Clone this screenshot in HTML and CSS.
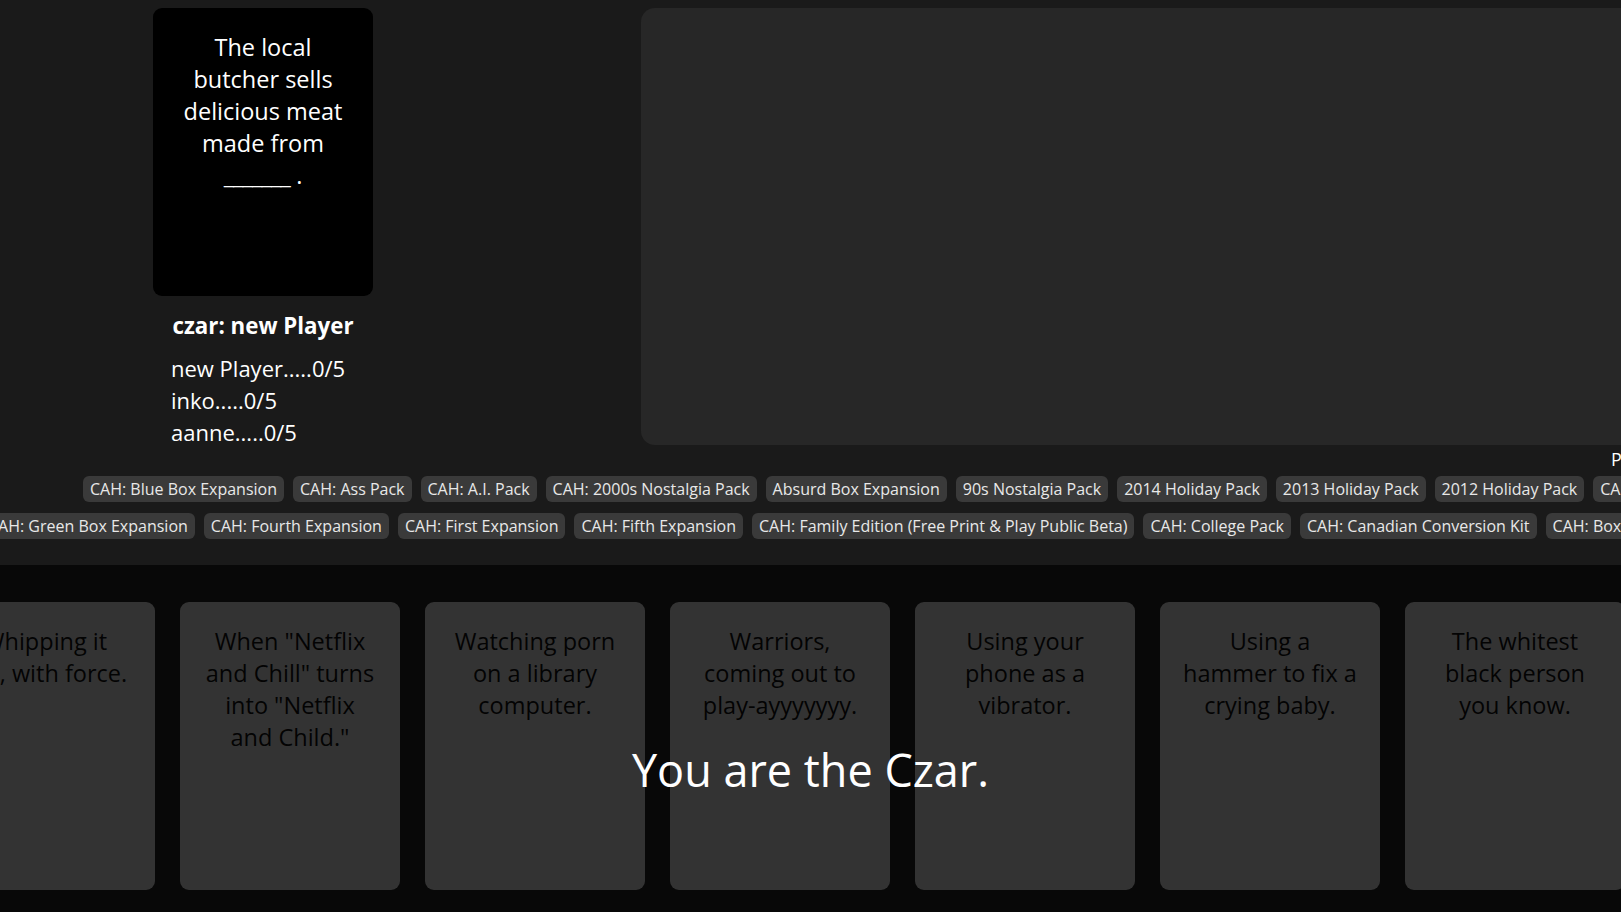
FILE: index.html
```html
<!DOCTYPE html>
<html lang="en">
<head>
<meta charset="utf-8">
<title>Czar</title>
<link rel="stylesheet" href="styles.css">
</head>
<body>
<main class="table">
  <section class="top">
    <div class="board">
      <div class="round">
        <div class="black-card">The local<br>butcher sells<br>delicious meat<br>made from<br><span class="blank">_______</span> .</div>
        <h2 class="czar">czar: new Player</h2>
        <ul class="players">
          <li>new Player.....0/5</li>
          <li>inko.....0/5</li>
          <li>aanne.....0/5</li>
        </ul>
      </div>
      <div class="submissions"></div>
    </div>
    <div class="packs-title">Packs</div>
    <div class="tags-row">
      <span class="tag">CAH: Blue Box Expansion</span>
      <span class="tag">CAH: Ass Pack</span>
      <span class="tag">CAH: A.I. Pack</span>
      <span class="tag">CAH: 2000s Nostalgia Pack</span>
      <span class="tag">Absurd Box Expansion</span>
      <span class="tag">90s Nostalgia Pack</span>
      <span class="tag">2014 Holiday Pack</span>
      <span class="tag">2013 Holiday Pack</span>
      <span class="tag">2012 Holiday Pack</span>
      <span class="tag">CAH: Base Set</span>
    </div>
    <div class="tags-row tags-row-alt">
      <span class="tag">CAH: Green Box Expansion</span>
      <span class="tag">CAH: Fourth Expansion</span>
      <span class="tag">CAH: First Expansion</span>
      <span class="tag">CAH: Fifth Expansion</span>
      <span class="tag">CAH: Family Edition (Free Print &amp; Play Public Beta)</span>
      <span class="tag">CAH: College Pack</span>
      <span class="tag">CAH: Canadian Conversion Kit</span>
      <span class="tag">CAH: Box Expansion</span>
    </div>
  </section>
  <section class="hand">
    <div class="hand-row">
      <div class="white-card">Whipping it<br>out, with force.</div>
      <div class="white-card">When "Netflix<br>and Chill" turns<br>into "Netflix<br>and Child."</div>
      <div class="white-card">Watching porn<br>on a library<br>computer.</div>
      <div class="white-card">Warriors,<br>coming out to<br>play-ayyyyyyy.</div>
      <div class="white-card">Using your<br>phone as a<br>vibrator.</div>
      <div class="white-card">Using a<br>hammer to fix a<br>crying baby.</div>
      <div class="white-card">The whitest<br>black person<br>you know.</div>
    </div>
    <div class="czar-overlay"><p class="czar-msg">You are the Czar.</p></div>
  </section>
</main>
</body>
</html>
```
FILE: styles.css
```css
* { box-sizing: border-box; }
html, body {
  margin: 0;
  padding: 0;
  width: 1621px;
  height: 912px;
  overflow: hidden;
  background: #1a1a1a;
  font-family: "Open Sans", "Noto Sans", "DejaVu Sans", sans-serif;
  color: #fff;
}
.table {
  display: flex;
  flex-direction: column;
  height: 912px;
}
.top {
  background: #1a1a1a;
  padding: 8px 0 27px;
  height: 565px;
  overflow: hidden;
}
.board {
  display: flex;
  align-items: flex-start;
}
.round {
  margin-left: 153px;
  width: 220px;
  flex: none;
}
.black-card {
  width: 220px;
  height: 288px;
  background: #000;
  border-radius: 9px;
  padding: 23px 10px 0;
  text-align: center;
  font-size: 23.5px;
  line-height: 32px;
  color: #fff;
  white-space: nowrap;
}
.blank { letter-spacing: -0.8px; }
.czar {
  margin: 14px 0 0;
  text-align: center;
  font-size: 22.3px;
  line-height: 32px;
  font-weight: 700;
  white-space: nowrap;
}
.players {
  list-style: none;
  margin: 10px 0 0;
  padding: 0 0 0 18px;
  font-size: 22px;
  line-height: 32px;
  white-space: nowrap;
}
.submissions {
  flex: none;
  margin-left: 268px;
  width: 1100px;
  height: 437px;
  background: #272727;
  border-radius: 14px;
}
.packs-title {
  padding-left: 1611px;
  font-size: 18px;
  line-height: 22px;
  white-space: nowrap;
}
.tags-row {
  display: flex;
  gap: 9px;
  margin-top: 6px;
  padding-left: 83px;
  white-space: nowrap;
}
.tags-row-alt {
  margin-top: 11px;
  padding-left: 0;
  margin-left: -19px;
}
.tag {
  flex: none;
  height: 26px;
  line-height: 26px;
  padding: 0 7px;
  background: #3a3a3a;
  color: #e8e8e8;
  border-radius: 6px;
  font-size: 16px;
}
.hand {
  position: relative;
  flex: 1;
  background: #282828;
  overflow: hidden;
}
.hand-row {
  display: flex;
  gap: 25px;
  margin-left: -65px;
  padding-top: 37px;
}
.white-card {
  flex: none;
  width: 220px;
  height: 288px;
  background: #fff;
  color: #111;
  border-radius: 9px;
  padding: 23px 8px 0;
  text-align: center;
  font-size: 23.5px;
  line-height: 32px;
  white-space: nowrap;
}
.czar-overlay {
  position: absolute;
  inset: 0;
  background: rgba(0, 0, 0, 0.8);
  padding-top: 173px;
  text-align: center;
}
.czar-msg {
  margin: 0;
  font-size: 45px;
  line-height: 64px;
  color: #fff;
}
```
